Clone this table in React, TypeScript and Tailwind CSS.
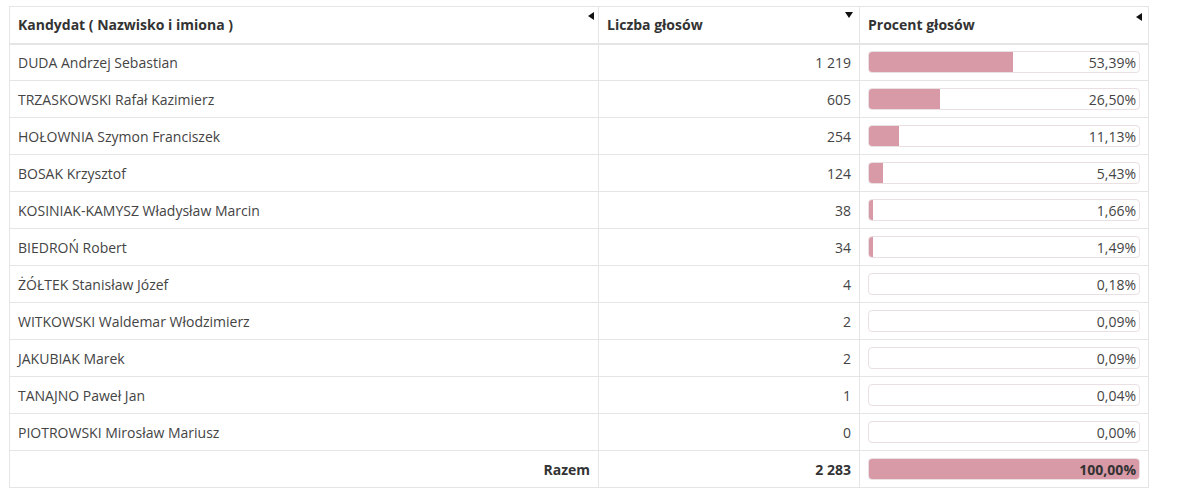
import React from "react";

const rows: [string, string, number, string][] = [
  ["DUDA Andrzej Sebastian", "1 219", 53.39, "53,39%"],
  ["TRZASKOWSKI Rafał Kazimierz", "605", 26.5, "26,50%"],
  ["HOŁOWNIA Szymon Franciszek", "254", 11.13, "11,13%"],
  ["BOSAK Krzysztof", "124", 5.43, "5,43%"],
  ["KOSINIAK-KAMYSZ Władysław Marcin", "38", 1.66, "1,66%"],
  ["BIEDROŃ Robert", "34", 1.49, "1,49%"],
  ["ŻÓŁTEK Stanisław Józef", "4", 0.18, "0,18%"],
  ["WITKOWSKI Waldemar Włodzimierz", "2", 0.09, "0,09%"],
  ["JAKUBIAK Marek", "2", 0.09, "0,09%"],
  ["TANAJNO Paweł Jan", "1", 0.04, "0,04%"],
  ["PIOTROWSKI Mirosław Mariusz", "0", 0, "0,00%"],
];

function Bar({ pct, label, bold }: { pct: number; label: string; bold?: boolean }) {
  const w = Math.floor((270 * pct) / 100);
  return (
    <div className="relative h-[22px] rounded-[4px] border border-[#eadfe2] bg-white overflow-hidden">
      <div className="absolute left-0 top-0 bottom-0 bg-[#d99aa8]" style={{ width: `${w}px` }} />
      <div className={`relative h-full flex items-center justify-end pr-[3px] text-[14px] ${bold ? "font-bold text-[#333]" : "text-[#444]"}`}>
        {label}
      </div>
    </div>
  );
}

function ArrowLeft() {
  return (
    <svg width="6" height="8" viewBox="0 0 6 8" className="block">
      <polygon points="6,0 6,8 0,4" fill="#111" />
    </svg>
  );
}
function ArrowDown() {
  return (
    <svg width="8" height="6" viewBox="0 0 8 6" className="block">
      <polygon points="0,0 8,0 4,6" fill="#111" />
    </svg>
  );
}

export default function App() {
  return (
    <div className="w-[1201px] h-[502px] bg-white pt-[6px] pl-[9px]" style={{ fontFamily: '"Open Sans", sans-serif' }}>
      <table className="border-collapse text-[14px] text-[#444] w-[1139px] table-fixed">
        <colgroup>
          <col className="w-[589px]" />
          <col className="w-[261px]" />
          <col className="w-[289px]" />
        </colgroup>
        <thead>
          <tr className="h-[37px]">
            <th className="relative border border-[#e5e5e5] border-b-2 text-left font-bold text-[#333] px-[8px] align-middle">
              Kandydat ( Nazwisko i imiona )
              <span className="absolute right-[4px] top-[5px]"><ArrowLeft /></span>
            </th>
            <th className="relative border border-[#e5e5e5] border-b-2 text-left font-bold text-[#333] px-[8px] align-middle">
              Liczba głosów
              <span className="absolute right-[6px] top-[5px]"><ArrowDown /></span>
            </th>
            <th className="relative border border-[#e5e5e5] border-b-2 text-left font-bold text-[#333] px-[8px] align-middle">
              Procent głosów
              <span className="absolute right-[6px] top-[6px]"><ArrowLeft /></span>
            </th>
          </tr>
        </thead>
        <tbody>
          {rows.map((r) => (
            <tr key={r[0]} className="h-[37px]">
              <td className="border border-[#e5e5e5] px-[8px] align-middle">{r[0]}</td>
              <td className="border border-[#e5e5e5] px-[8px] text-right align-middle">{r[1]}</td>
              <td className="border border-[#e5e5e5] px-[8px] align-middle">
                <Bar pct={r[2]} label={r[3]} />
              </td>
            </tr>
          ))}
          <tr className="h-[37px]">
            <td className="border border-[#e5e5e5] px-[8px] text-right font-bold text-[#333] align-middle">Razem</td>
            <td className="border border-[#e5e5e5] px-[8px] text-right font-bold text-[#333] align-middle">2 283</td>
            <td className="border border-[#e5e5e5] px-[8px] align-middle">
              <Bar pct={100} label="100,00%" bold />
            </td>
          </tr>
        </tbody>
      </table>
    </div>
  );
}
